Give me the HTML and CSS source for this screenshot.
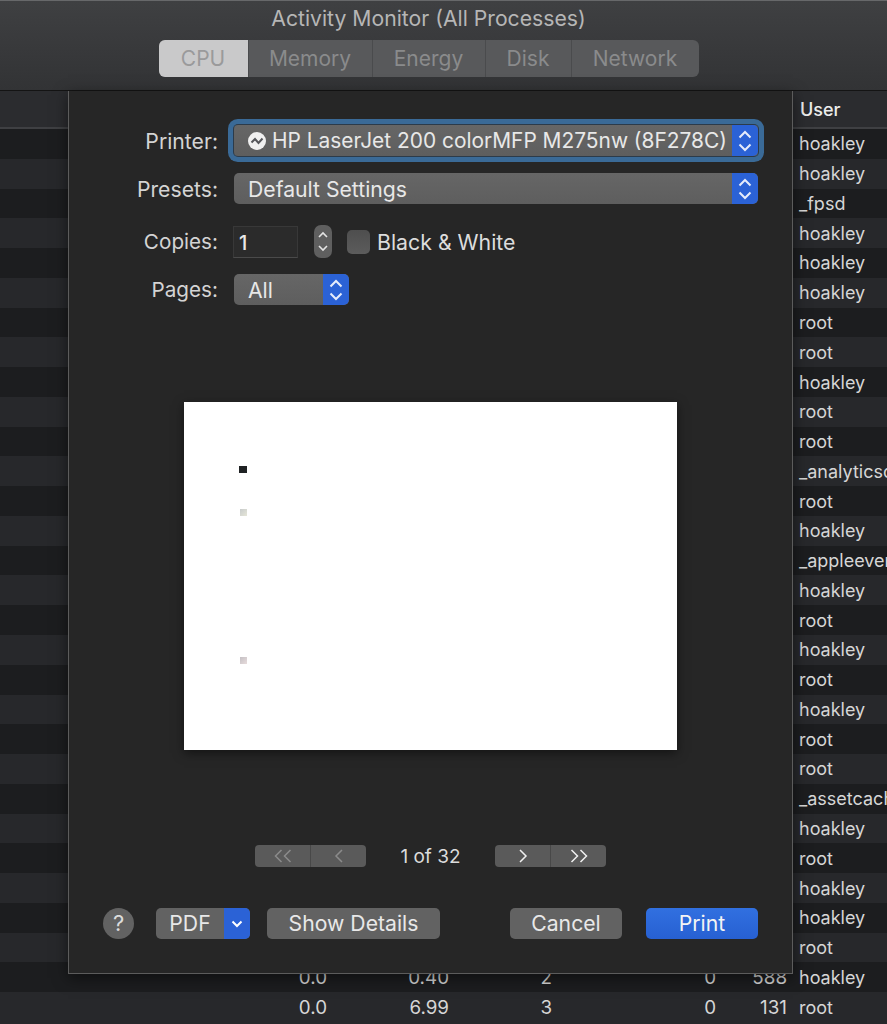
FILE: index.html
```html
<!DOCTYPE html>
<html lang="en">
<head>
    <meta charset="UTF-8">
    <title>Activity Monitor (All Processes)</title>
    <link rel="stylesheet" href="styles.css">
</head>
<body>
    <!-- Toolbar -->
    <header class="toolbar">
        <div class="title">Activity Monitor (All Processes)</div>
        <div class="tabs">
            <div class="tab tab-cpu active">CPU</div>
            <div class="tab tab-memory">Memory</div>
            <div class="tab tab-energy">Energy</div>
            <div class="tab tab-disk">Disk</div>
            <div class="tab tab-network">Network</div>
        </div>
    </header>

    <!-- Process table -->
    <div class="table">
        <div class="row head"><span class="user">User</span></div>
        <div class="row"><span class="user">hoakley</span></div>
        <div class="row"><span class="user">hoakley</span></div>
        <div class="row"><span class="user">_fpsd</span></div>
        <div class="row"><span class="user">hoakley</span></div>
        <div class="row"><span class="user">hoakley</span></div>
        <div class="row"><span class="user">hoakley</span></div>
        <div class="row"><span class="user">root</span></div>
        <div class="row"><span class="user">root</span></div>
        <div class="row"><span class="user">hoakley</span></div>
        <div class="row"><span class="user">root</span></div>
        <div class="row"><span class="user">root</span></div>
        <div class="row"><span class="user">_analyticsd</span></div>
        <div class="row"><span class="user">root</span></div>
        <div class="row"><span class="user">hoakley</span></div>
        <div class="row"><span class="user">_appleevents</span></div>
        <div class="row"><span class="user">hoakley</span></div>
        <div class="row"><span class="user">root</span></div>
        <div class="row"><span class="user">hoakley</span></div>
        <div class="row"><span class="user">root</span></div>
        <div class="row"><span class="user">hoakley</span></div>
        <div class="row"><span class="user">root</span></div>
        <div class="row"><span class="user">root</span></div>
        <div class="row"><span class="user">_assetcache</span></div>
        <div class="row"><span class="user">hoakley</span></div>
        <div class="row"><span class="user">root</span></div>
        <div class="row"><span class="user">hoakley</span></div>
        <div class="row"><span class="user">hoakley</span></div>
        <div class="row"><span class="user">root</span></div>
        <div class="row">
            <span class="num c1">0.0</span><span class="num c2">0.40</span><span class="num c3">2</span>
            <span class="num c4">0</span><span class="num c5">588</span><span class="user">hoakley</span>
        </div>
        <div class="row">
            <span class="num c1">0.0</span><span class="num c2">6.99</span><span class="num c3">3</span>
            <span class="num c4">0</span><span class="num c5">131</span><span class="user">root</span>
        </div>
    </div>

    <!-- Print sheet -->
    <div class="sheet">
        <div class="form">
            <div class="field">
                <label>Printer:</label>
                <div class="popup popup-wide focused">
                    <span class="popup-text printer-text">
                        <svg class="printer-icon" viewBox="0 0 18 18" width="18" height="18">
                            <circle cx="9" cy="9" r="9" fill="#f0f0f0"/>
                            <path d="M3.5 10.5 L7 7 L10.5 11 L14.5 6.5" fill="none" stroke="#55565a" stroke-width="2"/>
                        </svg>
                        HP LaserJet 200 colorMFP M275nw (8F278C)
                    </span>
                    <span class="arrows">
                        <svg viewBox="0 0 14 24" width="14" height="24"><path d="M1.5 8.5 L7 3 L12.5 8.5 M1.5 15.5 L7 21 L12.5 15.5" fill="none" stroke="#e6ecfb" stroke-width="2"/></svg>
                    </span>
                </div>
            </div>
            <div class="field">
                <label>Presets:</label>
                <div class="popup popup-wide">
                    <span class="popup-text">Default Settings</span>
                    <span class="arrows">
                        <svg viewBox="0 0 14 24" width="14" height="24"><path d="M1.5 8.5 L7 3 L12.5 8.5 M1.5 15.5 L7 21 L12.5 15.5" fill="none" stroke="#e6ecfb" stroke-width="2"/></svg>
                    </span>
                </div>
            </div>
            <div class="field field-copies">
                <label class="label-short">Copies:</label>
                <div class="copies-input">1</div>
                <div class="stepper">
                    <svg viewBox="0 0 18 33" width="18" height="33"><path d="M5 12 L9 8 L13 12 M5 21 L9 25 L13 21" fill="none" stroke="#e4e4e4" stroke-width="1.6"/></svg>
                </div>
                <div class="checkbox"></div>
                <span class="check-label">Black &amp; White</span>
            </div>
            <div class="field field-pages">
                <label class="label-short">Pages:</label>
                <div class="popup popup-pages">
                    <span class="popup-text">All</span>
                    <span class="arrows">
                        <svg viewBox="0 0 14 24" width="14" height="24"><path d="M1.5 8.5 L7 3 L12.5 8.5 M1.5 15.5 L7 21 L12.5 15.5" fill="none" stroke="#e6ecfb" stroke-width="2"/></svg>
                    </span>
                </div>
            </div>
        </div>

        <!-- Page preview -->
        <div class="preview">
            <div class="mark mark-black"></div>
            <div class="mark mark-thumb mark-one"></div>
            <div class="mark mark-thumb mark-two"></div>
        </div>

        <!-- Page navigation -->
        <div class="pager">
            <div class="nav-group">
                <div class="nav-btn">
                    <svg viewBox="0 0 24 14" width="24" height="14"><path d="M10.5 1 L4.5 7 L10.5 13 M19.5 1 L13.5 7 L19.5 13" fill="none" stroke="#8b8b8b" stroke-width="1.5"/></svg>
                </div>
                <div class="nav-btn">
                    <svg viewBox="0 0 24 14" width="24" height="14"><path d="M15 1 L9 7 L15 13" fill="none" stroke="#8b8b8b" stroke-width="1.5"/></svg>
                </div>
            </div>
            <div class="page-count">1 of 32</div>
            <div class="nav-group">
                <div class="nav-btn">
                    <svg viewBox="0 0 24 14" width="24" height="14"><path d="M9 1 L15 7 L9 13" fill="none" stroke="#f0f0f0" stroke-width="1.5"/></svg>
                </div>
                <div class="nav-btn">
                    <svg viewBox="0 0 24 14" width="24" height="14"><path d="M4.5 1 L10.5 7 L4.5 13 M13.5 1 L19.5 7 L13.5 13" fill="none" stroke="#f0f0f0" stroke-width="1.5"/></svg>
                </div>
            </div>
        </div>

        <!-- Buttons -->
        <div class="actions">
            <div class="help">?</div>
            <div class="pdf">
                <span class="pdf-text">PDF</span>
                <span class="pdf-arrow">
                    <svg viewBox="0 0 12 8" width="12" height="8"><path d="M1.5 1.5 L6 6 L10.5 1.5" fill="none" stroke="#fff" stroke-width="2"/></svg>
                </span>
            </div>
            <div class="btn btn-details">Show Details</div>
            <div class="spacer"></div>
            <div class="btn btn-cancel">Cancel</div>
            <div class="btn btn-print">Print</div>
        </div>
    </div>
</body>
</html>
```

FILE: styles.css
```css
/* General Reset */
* {
    margin: 0;
    padding: 0;
    box-sizing: border-box;
}

body {
    width: 887px;
    height: 1024px;
    overflow: hidden;
    position: relative;
    font-family: 'Inter', 'Liberation Sans', sans-serif;
    background: #27282b;
    color: #d2d2d2;
}

/* Toolbar */
.toolbar {
    height: 91px;
    background: linear-gradient(#3f4042, #323335);
    border-top: 1px solid #67686a;
    border-bottom: 1px solid #141414;
    display: flex;
    flex-direction: column;
    align-items: center;
    padding: 5px 30px 0 0;
}

.title {
    font-size: 21.2px;
    line-height: 24px;
    color: #b6b6b6;
}

.tabs {
    display: flex;
    height: 37px;
    margin-top: 10px;
    border-radius: 6px;
    overflow: hidden;
    background: #58595b;
}

.tab {
    display: flex;
    align-items: center;
    justify-content: center;
    font-size: 21px;
    color: #8a8b8c;
    border-left: 1px solid #4a4b4d;
}

.tab.active {
    background: #c9c9ca;
    color: #9a9a9b;
    border-left: none;
}

.tab-cpu { width: 89px; }
.tab-memory { width: 124px; }
.tab-energy { width: 113px; }
.tab-disk { width: 86px; }
.tab-network { width: 128px; }

/* Process table */
.row {
    height: 29.78px;
    position: relative;
    display: flex;
    align-items: center;
    font-size: 18px;
    color: #d6d6d6;
    overflow: hidden;
}

.row:nth-child(even) {
    background: #1c1d1f;
}

.row.head {
    height: 38px;
    background: #2b2c2f;
    border-bottom: 2px solid #3f4043;
}

.user {
    position: absolute;
    left: 799px;
    white-space: nowrap;
}

.head .user {
    left: 800px;
    color: #ececec;
    font-weight: 500;
}

.num {
    position: absolute;
    text-align: right;
    width: 60px;
    font-size: 18.8px;
}

.c1 { left: 267px; }
.c2 { left: 389px; }
.c3 { left: 492px; }
.c4 { left: 656px; }
.c5 { left: 727px; }

/* Print sheet */
.sheet {
    position: absolute;
    left: 68px;
    top: 91px;
    width: 725px;
    height: 883px;
    background: #262626;
    border: 1px solid #5c5c5c;
    border-top: none;
    box-shadow: 0 4px 14px rgba(0, 0, 0, 0.5);
    color: #dcdcdc;
    display: flex;
    flex-direction: column;
}

.form {
    padding-top: 34px;
}

.field {
    display: flex;
    align-items: center;
    height: 31px;
    margin-bottom: 17px;
    padding-left: 165px;
    position: relative;
}

.field-copies {
    margin-top: 22px;
    margin-bottom: 17px;
}

.field label {
    position: absolute;
    right: 574px;
    font-size: 21.2px;
    color: #d4d4d4;
}

.field .label-short {
    font-size: 20.7px;
}

.popup {
    display: flex;
    height: 31px;
    background: linear-gradient(#666666, #5e5e5e);
    border-radius: 5px;
    overflow: hidden;
    font-size: 21.2px;
}

.popup-wide {
    width: 524px;
}

.popup-pages {
    width: 115px;
}

.focused {
    overflow: visible;
    box-shadow: 0 0 0 1px #2c3b4a, 0 0 0 6px #3a6a97;
    border-radius: 4px;
}

.popup-text {
    flex: 1;
    display: flex;
    align-items: center;
    padding-left: 14px;
    color: #e8e8e8;
    white-space: nowrap;
}

.printer-text {
    gap: 6px;
    font-size: 20.9px;
}

.arrows {
    width: 26px;
    display: flex;
    align-items: center;
    justify-content: center;
    background: #2b62d6;
    border-radius: 0 5px 5px 0;
}

.copies-input {
    width: 65px;
    height: 32px;
    margin-left: -1px;
    background: #2b2b2b;
    border: 1px solid #383838;
    border-bottom-color: #4a4a4a;
    font-size: 20px;
    font-weight: 500;
    line-height: 32px;
    padding-left: 5px;
    color: #e8e8e8;
}

.stepper {
    width: 18px;
    height: 33px;
    margin-left: 16px;
    background: #5f5f5f;
    border-radius: 7px;
}

.checkbox {
    width: 23px;
    height: 24px;
    margin-left: 15px;
    background: linear-gradient(#4e4e4e, #5c5c5c);
    border-radius: 5px;
}

.check-label {
    margin-left: 7px;
    font-size: 21.3px;
    color: #dcdcdc;
}

/* Page preview */
.preview {
    position: relative;
    width: 493px;
    height: 348px;
    margin: 80px 0 0 115px;
    background: #fff;
    box-shadow: 0 3px 10px rgba(0, 0, 0, 0.5);
}

.mark {
    position: absolute;
}

.mark-black {
    left: 55px;
    top: 64px;
    width: 8px;
    height: 7px;
    background: #1f2224;
}

.mark-thumb {
    left: 56px;
    width: 7px;
    height: 7px;
    background: linear-gradient(135deg, #c8cccc, #e6e6d8);
}

.mark-one { top: 107px; }
.mark-two { top: 255px; background: linear-gradient(135deg, #c4c0c4, #e8dcdc); }

/* Page navigation */
.pager {
    display: flex;
    align-items: center;
    height: 22px;
    margin-top: 95px;
    padding-left: 186px;
}

.nav-group {
    display: flex;
    width: 111px;
    height: 22px;
    background: #5a5a5a;
    border-radius: 4px;
    overflow: hidden;
}

.nav-btn {
    flex: 1;
    display: flex;
    align-items: center;
    justify-content: center;
}

.nav-btn + .nav-btn {
    border-left: 1px solid #484848;
}

.page-count {
    width: 129px;
    text-align: center;
    font-size: 19px;
    color: #dcdcdc;
}

/* Buttons */
.actions {
    display: flex;
    align-items: center;
    height: 31px;
    margin-top: 41px;
    padding: 0 34px 0 34px;
    font-size: 21.2px;
    color: #e8e8e8;
}

.help {
    width: 31px;
    height: 31px;
    border-radius: 50%;
    background: #626262;
    text-align: center;
    line-height: 31px;
    font-size: 22px;
    color: #dcdcdc;
}

.pdf {
    display: flex;
    width: 94px;
    height: 31px;
    margin-left: 22px;
    background: #626262;
    border-radius: 5px;
    overflow: hidden;
}

.pdf-text {
    width: 68px;
    text-align: center;
    line-height: 31px;
}

.pdf-arrow {
    flex: 1;
    display: flex;
    align-items: center;
    justify-content: center;
    background: #2b62d6;
}

.btn {
    height: 31px;
    line-height: 31px;
    text-align: center;
    background: #626262;
    border-radius: 5px;
}

.btn-details {
    width: 173px;
    margin-left: 17px;
}

.spacer {
    flex: 1;
}

.btn-cancel {
    width: 112px;
}

.btn-print {
    width: 112px;
    margin-left: 24px;
    background: linear-gradient(#3170e0, #2760d2);
    color: #f4f4f4;
}
```
